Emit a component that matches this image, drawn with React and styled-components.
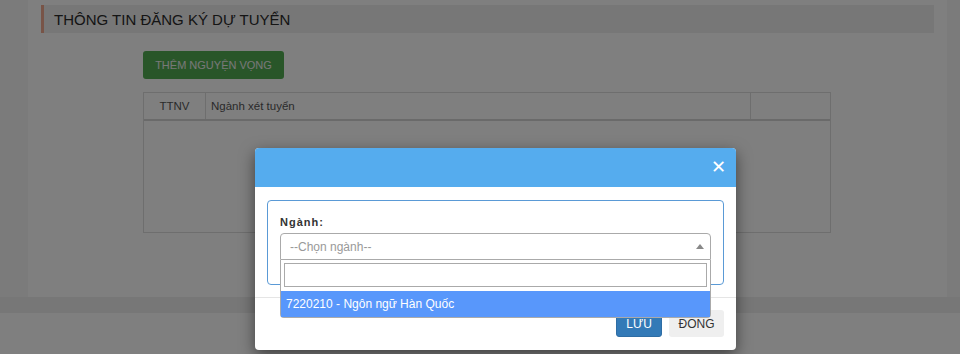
import React from 'react';
import styled, { createGlobalStyle } from 'styled-components';

const GlobalStyle = createGlobalStyle`
  html, body {
    margin: 0;
    padding: 0;
    width: 960px;
    height: 354px;
    overflow: hidden;
    font-family: "Liberation Sans", Arial, sans-serif;
  }
  * { box-sizing: border-box; }
`;

const Page = styled.div`
  position: relative;
  width: 960px;
  height: 354px;
  background-color: #f7f7f7;
  overflow: hidden;
`;

const Panel = styled.section`
  margin: 0 13px 0 28px;
  height: 297px;
  background-color: #fff;
  padding: 5px 13px 0;
`;

const Band = styled.div`
  height: 16px;
  background-color: #eee;
`;

const Footer = styled.div`
  height: 41px;
  background-color: #fefefe;
`;

const SectionTitle = styled.h3`
  margin: 0;
  height: 28px;
  display: flex;
  align-items: center;
  background-color: #eee;
  border-left: 3px solid #f0a88e;
  padding-left: 10px;
  font-size: 15px;
  font-weight: 400;
  color: #2a2a2a;
  text-transform: uppercase;
`;

const Content = styled.div`
  padding: 18px 0 0 102px;
  display: flex;
  flex-direction: column;
  align-items: flex-start;
  gap: 13px;
`;

const AddButton = styled.button`
  width: 141px;
  height: 28px;
  border: none;
  border-radius: 3px;
  background-color: #52ad52;
  color: #f0f0f0;
  font-family: "Liberation Sans", Arial, sans-serif;
  font-size: 11px;
  text-transform: uppercase;
`;

const Table = styled.div`
  width: 688px;
  border: 1px solid #ddd;
`;

const HeadRow = styled.div`
  display: grid;
  grid-template-columns: 62px 545px 1fr;
  height: 28px;
  border-bottom: 2px solid #d4d4d4;
`;

const HeadCell = styled.div`
  display: flex;
  align-items: center;
  justify-content: ${(p) => (p.center ? 'center' : 'flex-start')};
  padding-left: ${(p) => (p.center ? '0' : '5px')};
  border-right: ${(p) => (p.last ? 'none' : '1px solid #ddd')};
  font-size: 11.5px;
  color: #555;
`;

const BodyRow = styled.div`
  height: 111px;
`;

const Backdrop = styled.div`
  position: absolute;
  inset: 0;
  background-color: rgba(0, 0, 0, 0.5);
`;

const Modal = styled.div`
  position: absolute;
  left: 255px;
  top: 148px;
  width: 481px;
  background-color: #fff;
  border-radius: 4px;
  box-shadow: 0 5px 15px rgba(0, 0, 0, 0.5);
`;

const ModalHeader = styled.div`
  height: 39px;
  background-color: #55acee;
  border-radius: 4px 4px 0 0;
  display: flex;
  align-items: center;
  justify-content: flex-end;
  padding-right: 10px;
`;

const Close = styled.span`
  color: #fff;
  font-size: 18px;
  font-weight: 400;
  line-height: 1;
  margin-top: -1px;
`;

const ModalBody = styled.div`
  padding: 13px 12px 12px;
`;

const FieldBox = styled.div`
  border: 1px solid #5a9ad6;
  border-radius: 4px;
  padding: 15px 12px 24px;
`;

const Label = styled.div`
  font-size: 11px;
  font-weight: 700;
  letter-spacing: 1px;
  color: #333;
  margin-bottom: 5px;
`;

const SelectWrap = styled.div`
  position: relative;
`;

const Selection = styled.div`
  height: 27px;
  border: 1px solid #aaa;
  border-radius: 4px 4px 0 0;
  display: flex;
  align-items: center;
  justify-content: space-between;
  padding: 0 6px 0 9px;
  font-size: 12px;
  color: #999;
`;

const Arrow = styled.span`
  width: 0;
  height: 0;
  border-left: 4px solid transparent;
  border-right: 4px solid transparent;
  border-bottom: 5px solid #888;
`;

const Dropdown = styled.div`
  position: absolute;
  left: 0;
  right: 0;
  top: 27px;
  background-color: #fff;
  border: 1px solid #aaa;
  border-top: none;
  border-radius: 0 0 4px 4px;
  z-index: 2;
`;

const Search = styled.div`
  margin: 3px 3px 4px;
  height: 24px;
  border: 1px solid #aaa;
`;

const Option = styled.div`
  height: 26px;
  display: flex;
  align-items: center;
  padding-left: 5px;
  background-color: #5897fb;
  color: #fff;
  font-size: 12px;
`;

const ModalFooter = styled.div`
  border-top: 1px solid #e5e5e5;
  padding: 12px 12px 13px;
  display: flex;
  justify-content: flex-end;
  gap: 7px;
`;

const FooterButton = styled.button`
  height: 27px;
  width: ${(p) => p.w}px;
  border: ${(p) => (p.primary ? '1px solid #2e6da4' : 'none')};
  border-radius: 3px;
  background-color: ${(p) => (p.primary ? '#337ab7' : '#efefef')};
  color: ${(p) => (p.primary ? '#fff' : '#333')};
  font-family: "Liberation Sans", Arial, sans-serif;
  font-size: 12px;
  text-transform: uppercase;
  padding: 0;
`;

const App = () => {
  return (
    <Page>
      <GlobalStyle />
      <Panel>
        <SectionTitle>Thông tin đăng ký dự tuyển</SectionTitle>
        <Content>
          <AddButton>Thêm nguyện vọng</AddButton>
          <Table>
            <HeadRow>
              <HeadCell center>TTNV</HeadCell>
              <HeadCell>Ngành xét tuyển</HeadCell>
              <HeadCell last />
            </HeadRow>
            <BodyRow />
          </Table>
        </Content>
      </Panel>
      <Band />
      <Footer />
      <Backdrop />
      <Modal>
        <ModalHeader>
          <Close>✕</Close>
        </ModalHeader>
        <ModalBody>
          <FieldBox>
            <Label>Ngành:</Label>
            <SelectWrap>
              <Selection>
                --Chọn ngành--
                <Arrow />
              </Selection>
              <Dropdown>
                <Search />
                <Option>7220210 - Ngôn ngữ Hàn Quốc</Option>
              </Dropdown>
            </SelectWrap>
          </FieldBox>
        </ModalBody>
        <ModalFooter>
          <FooterButton primary w={46}>Lưu</FooterButton>
          <FooterButton w={55}>Đóng</FooterButton>
        </ModalFooter>
      </Modal>
    </Page>
  );
};

export default App;
